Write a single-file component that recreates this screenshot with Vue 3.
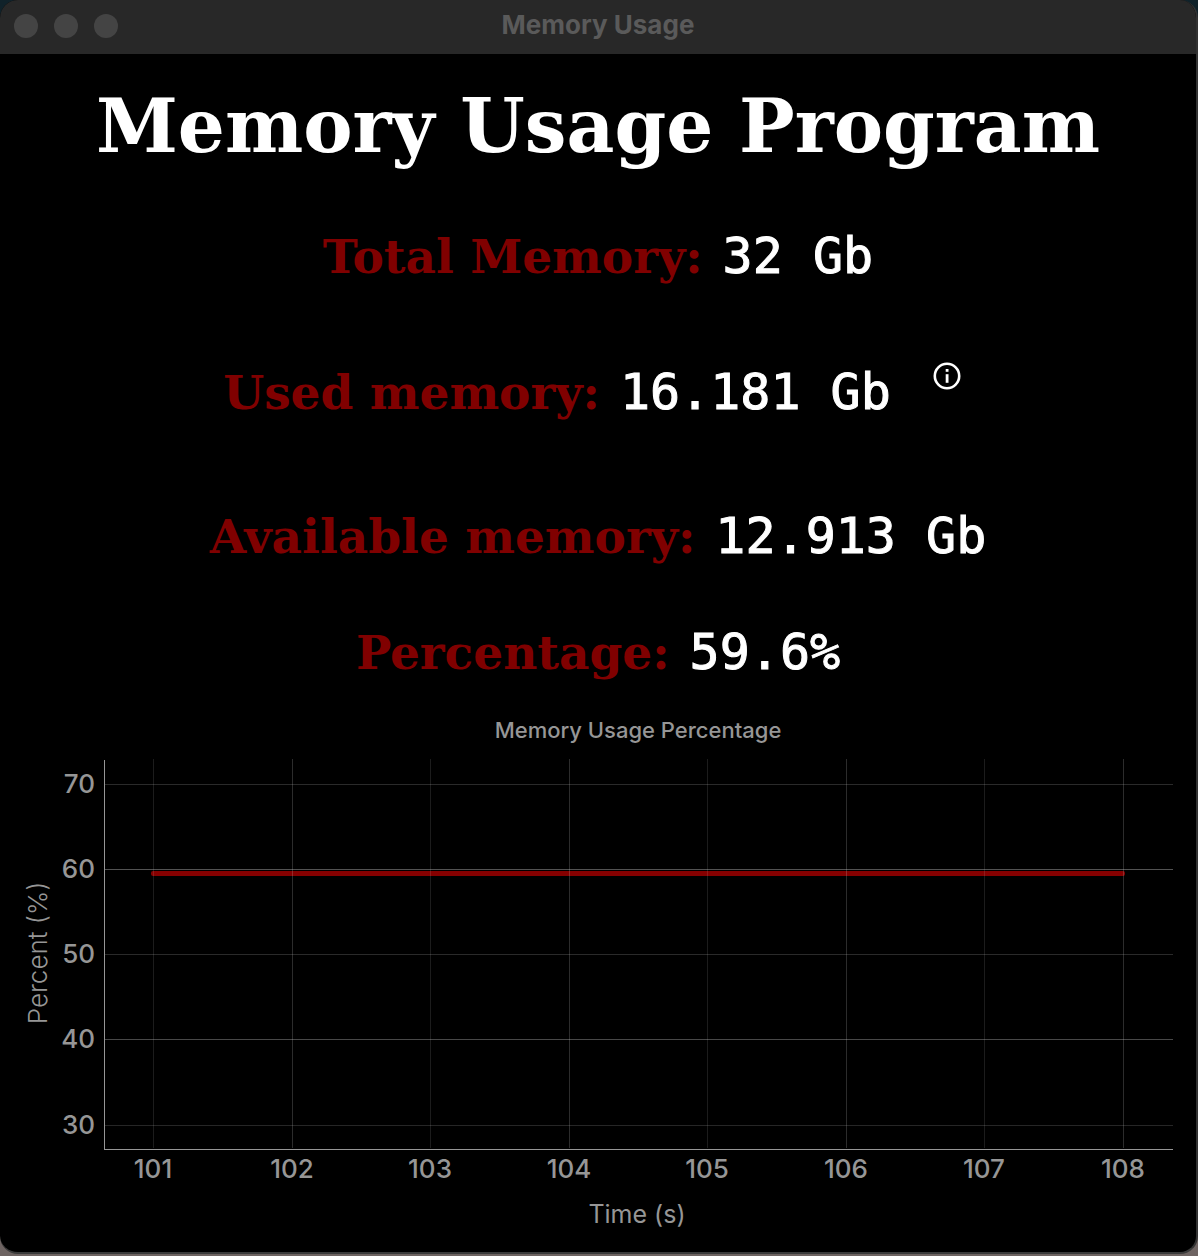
<script setup>
import { ref, computed } from 'vue'

const stats = ref([
  { id: 'total', label: 'Total Memory:', value: '32 Gb' },
  { id: 'used', label: 'Used memory:', value: '16.181 Gb', info: true },
  { id: 'available', label: 'Available memory:', value: '12.913 Gb' },
  { id: 'percentage', label: 'Percentage:', value: '59.6%' },
])

// Plot geometry, in view box units
const plot = { left: 104, right: 1173, top: 60, bottom: 449 }

const yTicks = [
  { value: 70, y: 84, color: '#2a2a2a' },
  { value: 60, y: 169, color: '#525252' },
  { value: 50, y: 254, color: '#2a2a2a' },
  { value: 40, y: 339, color: '#484848' },
  { value: 30, y: 425, color: '#262626' },
]

const xTicks = computed(() =>
  [153, 292, 430, 569, 707, 846, 984, 1123].map((x, i) => ({
    value: 101 + i,
    x,
    opacity: i % 2 ? 0.22 : 0.14,
  })),
)
</script>

<template>
  <div class="desktop">
    <main class="window">
      <header class="titlebar">
        <div class="controls">
          <button type="button" aria-label="Close"></button>
          <button type="button" aria-label="Minimize"></button>
          <button type="button" aria-label="Zoom"></button>
        </div>
        <span class="caption">Memory Usage</span>
      </header>

      <h1>Memory Usage Program</h1>

      <dl class="stats">
        <div v-for="s in stats" :key="s.id" class="row" :class="s.id">
          <dt>{{ s.label }}</dt>
          <dd>{{ s.value }}</dd>
          <dd v-if="s.info" class="info-cell">
            <button type="button" class="info" aria-label="About used memory">
              <svg viewBox="0 0 28 28" width="28" height="28">
                <circle cx="14" cy="14" r="12.2" fill="none" stroke="#fff" stroke-width="2.6" />
                <rect x="12.7" y="7" width="2.8" height="2.8" fill="#fff" />
                <rect x="12.7" y="12.2" width="2.8" height="8.6" fill="#fff" />
              </svg>
            </button>
          </dd>
        </div>
      </dl>

      <svg class="chart" viewBox="0 0 1196 552" role="img" aria-label="Memory Usage Percentage">
        <text class="chart-title" x="638" y="38">Memory Usage Percentage</text>

        <g shape-rendering="crispEdges">
          <rect
            v-for="t in yTicks"
            :key="t.value"
            :x="plot.left"
            :y="t.y"
            :width="plot.right - plot.left"
            height="1"
            :fill="t.color"
          />
        </g>
        <rect x="151" y="171" width="974" height="5" rx="2" fill="#850000" />
        <g shape-rendering="crispEdges">
          <rect
            v-for="t in xTicks"
            :key="t.value"
            :x="t.x"
            :y="plot.top - 1"
            width="1"
            :height="plot.bottom - plot.top"
            fill="#c8c8c8"
            :fill-opacity="t.opacity"
          />
          <rect :x="plot.left" :y="plot.top" width="1" :height="plot.bottom - plot.top + 1" fill="#969696" />
          <rect :x="plot.left" :y="plot.bottom" :width="plot.right - plot.left" height="1" fill="#969696" />
        </g>

        <text v-for="t in yTicks" :key="t.value" class="tick end" x="95" :y="t.y + 9">{{ t.value }}</text>
        <text v-for="t in xTicks" :key="t.value" class="tick" :x="t.x" y="478">{{ t.value }}</text>
        <text class="axis" x="637" y="523">Time (s)</text>
        <text class="axis thin" transform="translate(47 253) rotate(-90)">Percent (%)</text>
      </svg>
    </main>
  </div>
</template>

<style>
body {
  margin: 0;
  background: #000;
}
</style>

<style scoped>
.desktop {
  box-sizing: border-box;
  min-height: 100vh;
  padding-bottom: 2px;
  background: linear-gradient(#10222a, #10222a 50%, #6e6462 50%, #6e6462);
}

.window {
  box-sizing: border-box;
  min-height: calc(100vh - 2px);
  overflow: hidden;
  border-right: 2px solid #323232;
  border-bottom: 2px solid #3a3a3a;
  border-radius: 18px;
  background: #000;
}

.titlebar {
  display: grid;
  grid-template-columns: 1fr auto 1fr;
  align-items: center;
  height: 54px;
  padding: 0 14px 2px;
  box-sizing: border-box;
  background: #282828;
}

.controls {
  display: flex;
  gap: 16px;
}

.controls button {
  width: 24px;
  height: 24px;
  padding: 0;
  border: 0;
  border-radius: 50%;
  background: #444;
}

.caption {
  padding-bottom: 2px;
  color: #5a5a5a;
  font: 700 26px/30px Inter, sans-serif;
}

h1 {
  margin: 0;
  padding-top: 24px;
  color: #fff;
  font: 700 74px/96px "DejaVu Serif", serif;
  text-align: center;
  white-space: nowrap;
}

.stats {
  margin: 0;
  padding-top: 48px;
}

.row {
  display: flex;
  justify-content: center;
  align-items: baseline;
  gap: 20px;
  height: 68px;
  line-height: 68px;
  white-space: nowrap;
}

.total {
  margin-bottom: 68px;
}

.used {
  margin-bottom: 76px;
}

.available {
  margin-bottom: 48px;
}

.percentage {
  margin-bottom: 14px;
}

dt {
  color: #800000;
  font-family: "DejaVu Serif", serif;
  font-size: 47px;
  font-weight: 700;
}

dd {
  margin: 0;
  color: #fff;
  font-family: "DejaVu Sans Mono", monospace;
  font-size: 50px;
  -webkit-text-stroke: 1px #fff;
}

.info-cell {
  align-self: flex-start;
  padding: 4px 12px 0 22px;
  line-height: 0;
}

.info {
  display: block;
  padding: 0;
  border: 0;
  background: none;
}

.info svg {
  display: block;
}

.chart {
  display: block;
  width: 100%;
  height: auto;
}

.chart text {
  fill: #969696;
  font-family: Inter, sans-serif;
  text-anchor: middle;
}

.chart .chart-title {
  font-size: 22px;
  font-weight: 500;
}

.chart .tick {
  font-size: 26px;
  font-weight: 500;
}

.chart .end {
  text-anchor: end;
}

.chart .axis {
  font-size: 25px;
}

.chart .thin {
  font-size: 26px;
  font-weight: 300;
}
</style>
